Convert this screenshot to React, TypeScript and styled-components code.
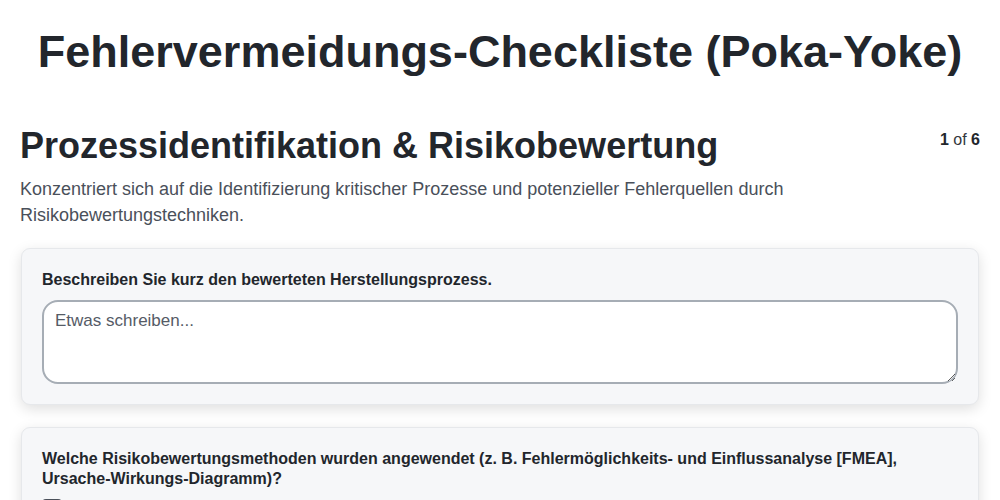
import React from 'react';
import styled, { createGlobalStyle } from 'styled-components';

const GlobalStyle = createGlobalStyle`
  body {
    margin: 0;
    background: #ffffff;
    font-family: 'Liberation Sans', Arial, sans-serif;
    color: #1f2328;
  }
`;

const Page = styled.div`
  padding: 0 20px;
`;

const Title = styled.h1`
  margin: 0;
  padding: 22px 0 0;
  text-align: center;
  font-size: 45px;
  line-height: 60px;
  font-weight: 700;
  color: #22262c;
`;

const SectionHeader = styled.div`
  display: flex;
  justify-content: space-between;
  align-items: flex-start;
  margin-top: 40px;
`;

const SectionTitle = styled.h2`
  margin: 0;
  font-size: 36px;
  line-height: 48px;
  font-weight: 700;
  color: #22262c;
`;

const Pager = styled.div`
  font-size: 16px;
  line-height: 20px;
  margin-top: 8px;
  color: #33373d;

  b {
    color: #22262c;
  }
`;

const Description = styled.p`
  margin: 6px 0 20px;
  font-size: 18px;
  line-height: 26px;
  color: #4a505a;
  max-width: 800px;
`;

const Card = styled.div`
  background: #f6f7f9;
  border: 1px solid #e6e8eb;
  border-radius: 9px;
  box-shadow: 0 4px 14px rgba(0, 0, 0, 0.13);
  padding: 21px 20px 20px;
  margin: 0 1px 22px;
`;

const Label = styled.div`
  font-size: 16px;
  line-height: 20px;
  font-weight: 700;
  color: #22262c;
  margin-bottom: 10px;
`;

const TextArea = styled.textarea`
  display: block;
  box-sizing: border-box;
  width: 100%;
  height: 84px;
  border: 2px solid #a6adb5;
  border-radius: 16px;
  background: #ffffff;
  padding: 8px 11px;
  font-family: 'Liberation Sans', Arial, sans-serif;
  font-size: 17px;
  line-height: 22px;
  color: #22262c;
  outline: none;

  &::placeholder {
    color: #555b66;
  }
`;

const Options = styled.div`
  display: flex;
  flex-direction: column;
  gap: 10px;
`;

const CheckRow = styled.label`
  display: flex;
  align-items: flex-start;
  gap: 10px;
  font-size: 16px;
  line-height: 20px;
  color: #22262c;
`;

const Box = styled.span`
  flex: none;
  width: 20px;
  height: 20px;
  border: 2px solid #4a505a;
  border-radius: 4px;
  box-sizing: border-box;
  background: #fff;
`;

const OptionText = styled.span`
  padding-top: 6px;
`;

export default function App() {
  return (
    <Page>
      <GlobalStyle />
      <Title>Fehlervermeidungs-Checkliste (Poka-Yoke)</Title>
      <SectionHeader>
        <SectionTitle>Prozessidentifikation &amp; Risikobewertung</SectionTitle>
        <Pager>
          <b>1</b> of <b>6</b>
        </Pager>
      </SectionHeader>
      <Description>
        Konzentriert sich auf die Identifizierung kritischer Prozesse und potenzieller Fehlerquellen durch
        Risikobewertungstechniken.
      </Description>
      <Card>
        <Label>Beschreiben Sie kurz den bewerteten Herstellungsprozess.</Label>
        <TextArea placeholder="Etwas schreiben..." />
      </Card>
      <Card>
        <Label>
          Welche Risikobewertungsmethoden wurden angewendet (z. B. Fehlermöglichkeits- und Einflussanalyse [FMEA],
          Ursache-Wirkungs-Diagramm)?
        </Label>
        <Options>
          <CheckRow>
            <Box />
            <OptionText>Fehlermöglichkeits- und Einflussanalyse (FMEA)</OptionText>
          </CheckRow>
        </Options>
      </Card>
    </Page>
  );
}
